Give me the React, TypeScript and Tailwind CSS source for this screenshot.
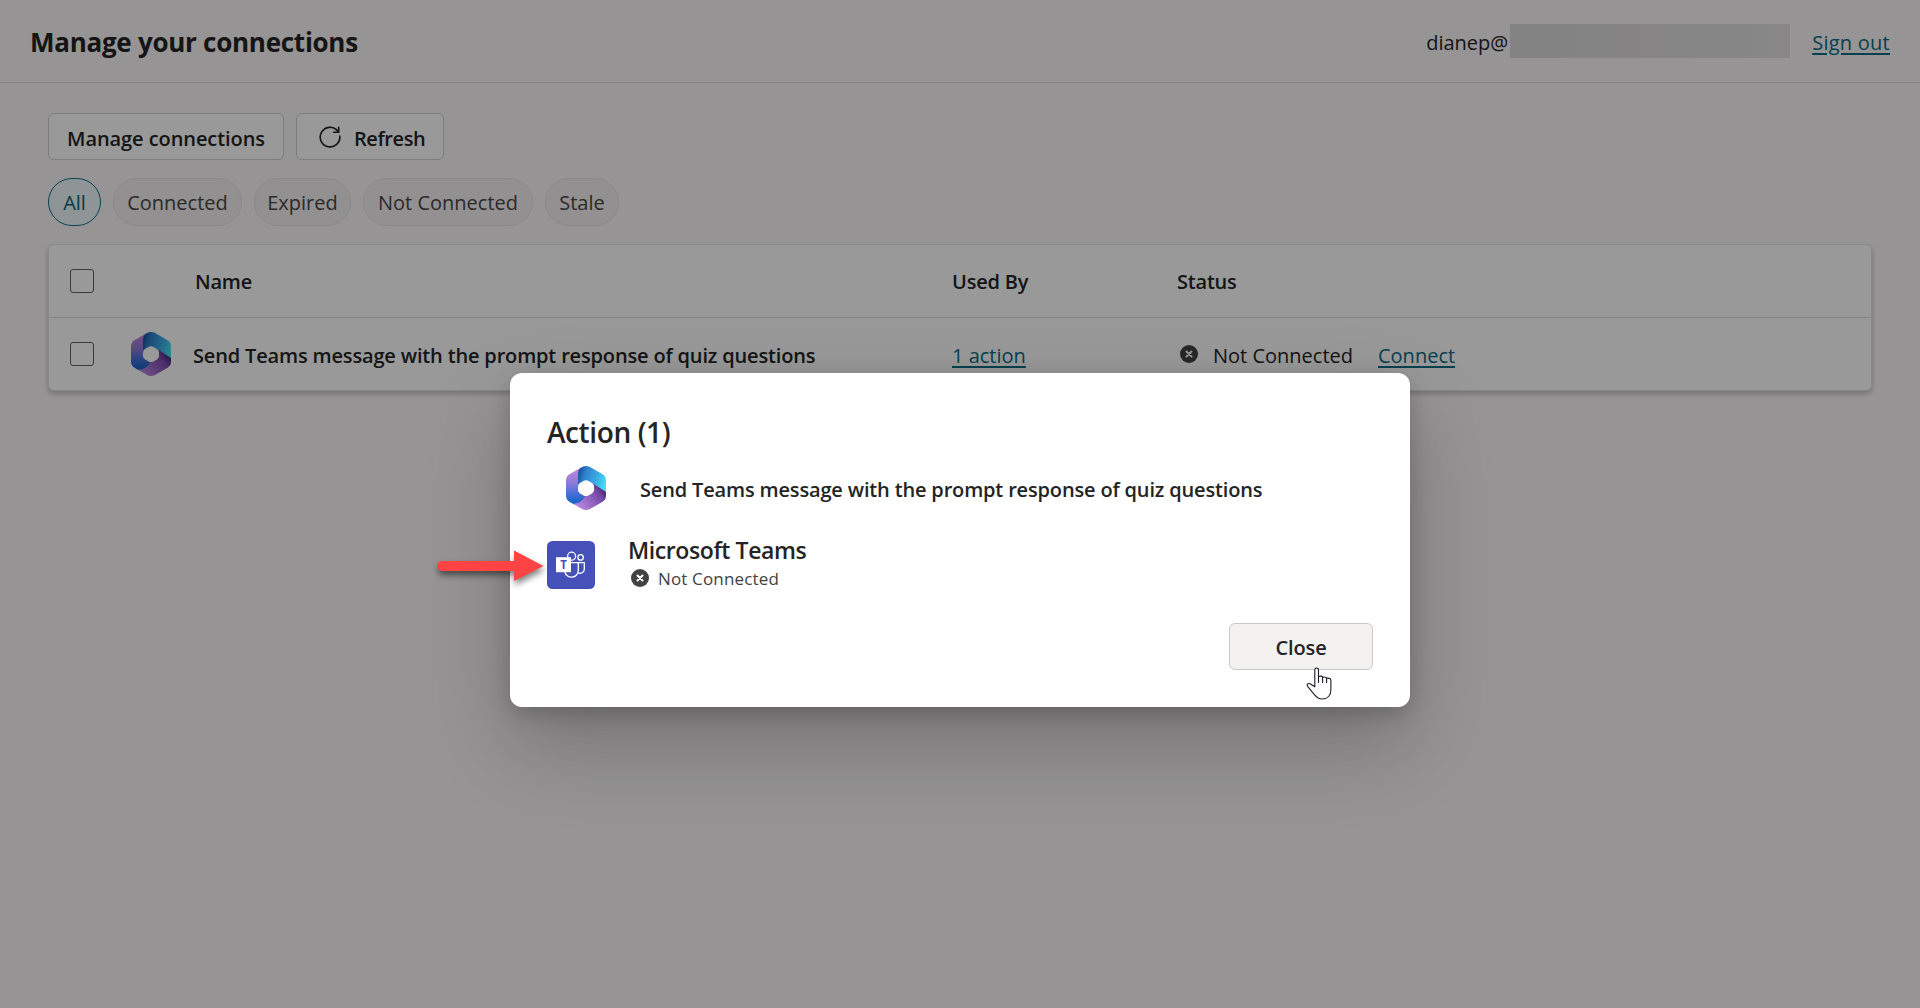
import React from "react";

const ACTION_NAME = "Send Teams message with the prompt response of quiz questions";

function M365Logo({ id }: { id: string }) {
  return (
    <svg width="40" height="44" viewBox="0 0 40 44" className="shrink-0">
      <defs>
        <linearGradient id={`${id}-left`} x1="8" y1="6" x2="9" y2="38" gradientUnits="userSpaceOnUse">
          <stop offset="0" stopColor="#b583d8" />
          <stop offset="0.35" stopColor="#8d7ada" />
          <stop offset="0.65" stopColor="#4b70d8" />
          <stop offset="1" stopColor="#0f63c4" />
        </linearGradient>
        <linearGradient id={`${id}-top`} x1="12" y1="12" x2="39" y2="20" gradientUnits="userSpaceOnUse">
          <stop offset="0" stopColor="#1f56a8" />
          <stop offset="0.2" stopColor="#2f80cc" />
          <stop offset="0.6" stopColor="#3aa8e4" />
          <stop offset="1" stopColor="#45dcf6" />
        </linearGradient>
        <linearGradient id={`${id}-bottom`} x1="9" y1="41" x2="36" y2="21" gradientUnits="userSpaceOnUse">
          <stop offset="0" stopColor="#bd8ce2" />
          <stop offset="0.45" stopColor="#9868c6" />
          <stop offset="0.8" stopColor="#7448a8" />
          <stop offset="1" stopColor="#432673" />
        </linearGradient>
        <mask id={`${id}-mask`}>
          <path
            fill="#fff"
            d="M16 1.1Q20-1 24 1.1L36.2 8Q40 10.2 40 14.5V29.5Q40 33.8 36.2 36L24 42.9Q20 45 16 42.9L3.8 36Q0 33.8 0 29.5V14.5Q0 10.2 3.8 8Z"
          />
          <path
            fill="#000"
            d="M17.5 15Q20 13.7 22.5 15L26 17Q28 18.3 28 20.5V24Q28 26 26.2 27.2L22.5 29.4Q20 30.7 17.5 29.4L13.9 27.2Q12 26 12 24V20.5Q12 18.3 13.9 17Z"
          />
        </mask>
      </defs>
      <g mask={`url(#${id}-mask)`}>
        <path d="M0 0H40V44H0Z" fill={`url(#${id}-left)`} />
        <path d="M20 28.5L27 16.5L40 25V44H12L7.5 37.6C13 37.6 17 35 20 28.5Z" fill={`url(#${id}-bottom)`} />
        <path d="M12 22V7Q12.5 2 17 0H40V26L25 16.3Q17 12.5 12 22Z" fill={`url(#${id}-top)`} />
      </g>
    </svg>
  );
}

function TeamsTile() {
  return (
    <svg width="48" height="48" viewBox="0 0 48 48" className="shrink-0">
      <rect width="48" height="48" rx="5.5" fill="#4650b9" />
      <g fill="none" stroke="#fff" strokeWidth="1.3">
        <circle cx="24.6" cy="15.2" r="4" />
        <circle cx="33.6" cy="16.4" r="2.7" />
        <path d="M23 21.7H31.3V29.5A6.8 6.8 0 0 1 17.9 31" />
        <path d="M31.3 21.7H37.3V28.4A4.2 4.2 0 0 1 31.2 31.8" />
      </g>
      <rect x="9" y="16.2" width="15" height="15" fill="#fff" />
      <text x="16.5" y="27.9" textAnchor="middle" fontFamily="Open Sans, sans-serif" fontWeight="700" fontSize="11.5" fill="#4650b9">
        T
      </text>
    </svg>
  );
}

function RefreshIcon() {
  return (
    <svg width="24" height="24" viewBox="0 0 24 24" fill="none" stroke="currentColor" strokeWidth="1.6" strokeLinecap="round" strokeLinejoin="round">
      <path d="M21.8 11A9.8 9.8 0 1 1 19.4 5.6L20.6 7.1" />
      <path d="M20.7 2.2V7.2H15.7" />
    </svg>
  );
}

function NotConnectedIcon() {
  return (
    <svg width="18" height="18" viewBox="0 0 18 18" className="shrink-0">
      <circle cx="9" cy="9" r="9" fill="#424242" />
      <path d="M6.5 6.5L11.5 11.5M11.5 6.5L6.5 11.5" stroke="#fff" strokeWidth="2" strokeLinecap="round" />
    </svg>
  );
}

function HandCursor() {
  return (
    <svg width="27" height="34" viewBox="0 0 27 34" className="absolute left-[795.5px] top-[293.5px]">
      <path
        d="M8.8 19.8V3.2Q8.8 1 10.6 1Q12.5 1 12.5 3.2V9.6Q15.8 8.4 16.6 10.2Q19.8 9.4 20.6 11.2Q24.9 10.6 24.9 13.6V22.5C24.9 28.5 21.5 32 16.4 32C12.6 32 10.6 30.4 8.4 27.6L1.8 19.6C0.2 17.2 2 15.8 4 16.8Z"
        fill="#fff"
        stroke="#1b1b2b"
        strokeWidth="1.1"
        strokeLinejoin="round"
      />
      <path d="M12.5 9V15.4M16.6 10V15.4M20.6 11V15.6" stroke="#1b1b2b" strokeWidth="1.1" strokeLinecap="round" />
    </svg>
  );
}

function PointerArrow() {
  return (
    <svg width="120" height="50" viewBox="0 0 120 50" className="absolute -left-[80px] top-[171px] drop-shadow-[1px_4px_3px_rgba(0,0,0,0.5)]">
      <path d="M12 17H84V6.5L113.5 22L84 37V27H12A5 5 0 0 1 12 17Z" fill="#fd4343" />
    </svg>
  );
}

function Checkbox() {
  return <span className="block size-6 rounded-[3px] border-[1.5px] border-[#616161] bg-white" />;
}

const FILTERS = [
  { label: "Connected", width: "w-[129px]" },
  { label: "Expired", width: "w-[97px]" },
  { label: "Not Connected", width: "w-[170px]" },
  { label: "Stale", width: "w-[74px]" },
];

const linkClass = "text-[#0b6c84] underline decoration-2 underline-offset-[3px]";
const rowClass = "grid grid-cols-[61px_62px_759px_225px_1fr] items-center pl-[21px]";

export default function App() {
  return (
    <div className="relative h-[1008px] w-full overflow-hidden bg-[#faf7f7] font-['Open_Sans',sans-serif] text-[20px] leading-7 text-[#242424]">
      <header className="flex h-[83px] items-center justify-between border-b border-[#dcd9d9] px-[30px]">
        <h1 className="pt-[2px] text-[26px] font-bold tracking-[-0.27px]">Manage your connections</h1>
        <div className="flex items-center">
          <span className="pt-[3px]">dianep@</span>
          <span className="mr-[22px] ml-[2px] h-[34px] w-[280px] bg-linear-to-r from-[#dcdada] via-[#dfdddd] to-[#e4e2e2]" />
          <a className={`${linkClass} pt-[3px] tracking-[0.25px]`}>Sign out</a>
        </div>
      </header>

      <main className="px-12 pt-[30px]">
        <div className="flex gap-3">
          <button className="h-[47px] w-[236px] rounded-md border-[1.5px] border-[#d1d1d1] bg-white pt-[4px] font-semibold tracking-[-0.08px]">
            Manage connections
          </button>
          <button className="flex h-[47px] w-[148px] items-center gap-[12px] rounded-md border-[1.5px] border-[#d1d1d1] bg-white pl-[21px] font-semibold tracking-[-0.4px]">
            <RefreshIcon />
            <span className="pt-[4px]">Refresh</span>
          </button>
        </div>

        <div className="mt-[18px] flex gap-3">
          <button className="h-12 w-[53px] rounded-full border-[1.5px] border-[#0f6f86] bg-[#eff9fa] pt-[2px] text-[#0d6072]">All</button>
          {FILTERS.map((f) => (
            <button key={f.label} className={`${f.width} h-12 rounded-full border-[1.5px] border-[#e6e3e3] bg-[#f4f1f1] pt-[2px] text-[#484644]`}>
              {f.label}
            </button>
          ))}
        </div>

        <section className="mt-[18px] rounded-md border border-[#e4e4e4] bg-white shadow-[0_3px_5px_rgba(0,0,0,0.22)]">
          <div className={`${rowClass} h-[73px] border-b border-[#dedede] font-semibold tracking-[-0.2px]`}>
            <Checkbox />
            <span />
            <span className="pt-[2px] pl-[2px]">Name</span>
            <span className="pt-[2px]">Used By</span>
            <span className="pt-[2px]">Status</span>
          </div>
          <div className={`${rowClass} h-[72px]`}>
            <Checkbox />
            <M365Logo id="row" />
            <span className="pt-[3px] font-semibold tracking-[-0.16px]">{ACTION_NAME}</span>
            <span className="pt-[3px]">
              <a className={linkClass}>1 action</a>
            </span>
            <span className="flex items-center pl-[3px]">
              <NotConnectedIcon />
              <span className="ml-[15px] pt-[3px]">Not Connected</span>
              <a className={`${linkClass} ml-[25px] pt-[3px]`}>Connect</a>
            </span>
          </div>
        </section>
      </main>

      <div className="absolute inset-0 flex items-start justify-center bg-black/40 pt-[373px]">
        <div
          role="dialog"
          className="relative flex h-[334px] w-[900px] flex-col rounded-xl bg-white px-[37px] pt-[40px] shadow-[0_38px_86px_rgba(0,0,0,0.22),0_7px_21px_rgba(0,0,0,0.18)]"
        >
          <h2 className="-mt-px text-[28px] leading-10 font-semibold tracking-[-0.4px]">Action (1)</h2>
          <div className="mt-[14px] flex h-11 items-center pl-[19px]">
            <M365Logo id="dialog" />
            <span className="ml-[34px] pt-[3px] font-semibold tracking-[-0.16px]">{ACTION_NAME}</span>
          </div>
          <div className="mt-[31px] flex h-12">
            <TeamsTile />
            <div className="-mt-[5px] ml-[33px] flex flex-col">
              <span className="text-[23px] leading-[28px] font-semibold tracking-[-0.4px]">Microsoft Teams</span>
              <span className="flex h-[27px] items-center pl-[3px] text-[17px] leading-[27px] tracking-[0.15px] text-[#424242]">
                <NotConnectedIcon />
                <span className="ml-[9px] pt-[2px]">Not Connected</span>
              </span>
            </div>
          </div>
          <button className="mt-[34px] h-[47px] w-36 self-end rounded-md border-[1.5px] border-[#c9c9c9] bg-[#f3f2f1] pt-[3px] font-semibold tracking-[-0.1px]">
            Close
          </button>
          <HandCursor />
          <PointerArrow />
        </div>
      </div>
    </div>
  );
}
